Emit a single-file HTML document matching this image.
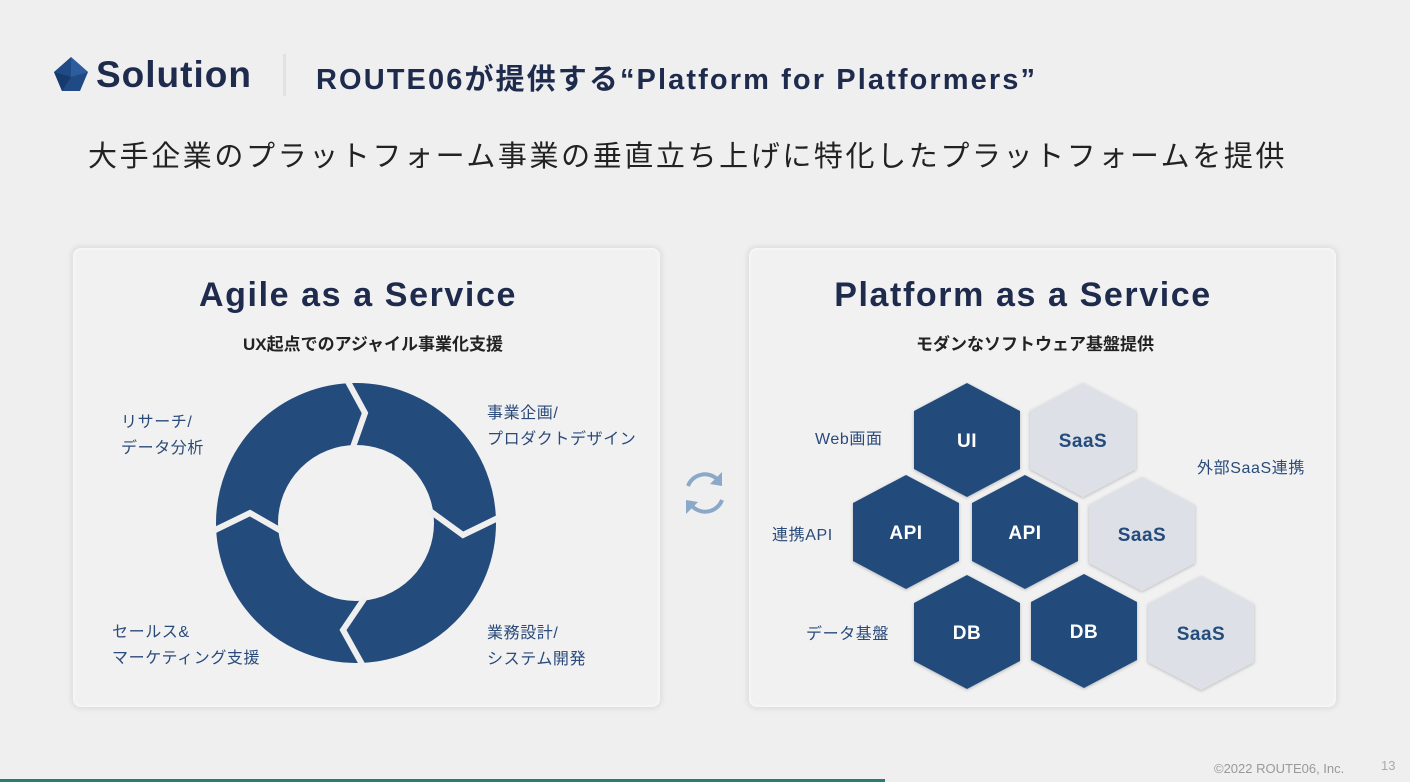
<!DOCTYPE html>
<html><head><meta charset="utf-8"><style>
body{margin:0;width:1410px;height:782px;background:#efefef;position:relative;overflow:hidden;font-family:"Liberation Sans","Noto Sans CJK JP",sans-serif;color:#1e2b4d}
.a{position:absolute;white-space:nowrap}
.card{position:absolute;top:248px;height:459px;background:#f1f1f1;border-radius:8px;box-shadow:0 0 6px 2px rgba(0,0,0,.08), inset 0 0 4px rgba(255,255,255,.9)}
.h{font-weight:bold;font-size:34px;color:#1e2b4d;text-align:center;letter-spacing:1.6px}
.s{font-size:17px;font-weight:bold;text-align:center;color:#222}
.l{font-size:16px;color:#2a4a7a;line-height:26px;letter-spacing:.6px}
</style></head><body>
<svg class="a" style="left:54px;top:57px" width="36" height="36" viewBox="0 0 36 36"><polygon points="17,0 34,15 26,34 8,34 0,15" fill="#1f4a85"/><polygon points="17,0 34,15 17,20" fill="#2d5d9c"/><polygon points="0,15 17,20 8,34" fill="#163a6c"/></svg>
<div class="a" style="left:96px;top:54px;font-size:37px;font-weight:bold;color:#1e2b4d;letter-spacing:1px">Solution</div>
<div class="a" style="left:283px;top:54px;width:3px;height:42px;background:#e2e2e2"></div>
<div class="a" style="left:316px;top:56px;font-size:29px;font-weight:bold;color:#1e2b4d;letter-spacing:2.1px">ROUTE06が提供する“Platform for Platformers”</div>
<div class="a" style="left:88px;top:133px;font-size:29px;color:#222;letter-spacing:2.6px">大手企業のプラットフォーム事業の垂直立ち上げに特化したプラットフォームを提供</div>
<div class="card" style="left:73px;width:587px">
<div class="a h" style="top:28px;left:0;width:570px">Agile as a Service</div>
<div class="a s" style="top:82px;left:0;width:600px">UX起点でのアジャイル事業化支援</div>
</div>
<div class="card" style="left:749px;width:587px">
<div class="a h" style="top:28px;left:0;width:548px">Platform as a Service</div>
<div class="a s" style="top:82px;left:0;width:572px">モダンなソフトウェア基盤提供</div>
</div>
<svg class="a" style="left:0;top:0" width="1410" height="782">
<circle cx="356" cy="523" r="109" fill="none" stroke="#234b7c" stroke-width="62"/>
<g fill="none" stroke="#efefef" stroke-width="6" stroke-linejoin="miter">
<polyline points="347,380 365,413 353,447"/>
<polyline points="430,511 463,535 500,517"/>
<polyline points="366,596 343,630 363,666"/>
<polyline points="283,532 250,513 213,531"/>
</g>
<g fill="none" stroke="#8aa8c8" stroke-width="4">
<path d="M688,486 A18,18 0 0 1 718,480"/><polygon points="722,472 722,486 710,484" fill="#8aa8c8" stroke="none"/>
<path d="M722,500 A18,18 0 0 1 692,506"/><polygon points="686,514 686,500 698,502" fill="#8aa8c8" stroke="none"/>
</g>
<defs><filter id="f"><feDropShadow dx="0" dy="1" stdDeviation="1.5" flood-opacity=".25"/></filter></defs>
<g filter="url(#f)">
<g fill="#234b7c"><polygon points="967,383 1020,411 1020,469 967,497 914,469 914,411"/>
<polygon points="906,475 959,503 959,561 906,589 853,561 853,503"/>
<polygon points="1025,475 1078,503 1078,561 1025,589 972,561 972,503"/>
<polygon points="967,575 1020,603 1020,661 967,689 914,661 914,603"/>
<polygon points="1084,574 1137,602 1137,660 1084,688 1031,660 1031,602"/></g>
<g fill="#dde0e6"><polygon points="1083,383 1136,411 1136,469 1083,497 1030,469 1030,411"/>
<polygon points="1142,477 1195,505 1195,563 1142,591 1089,563 1089,505"/>
<polygon points="1201,576 1254,604 1254,662 1201,690 1148,662 1148,604"/></g>
</g>
<g font-family="Liberation Sans" font-weight="bold" font-size="19" text-anchor="middle" letter-spacing="0.5">
<g fill="#fff"><text x="967" y="447">UI</text><text x="906" y="539">API</text><text x="1025" y="539">API</text><text x="967" y="639">DB</text><text x="1084" y="638">DB</text></g>
<g fill="#234b7c"><text x="1083" y="447">SaaS</text><text x="1142" y="541">SaaS</text><text x="1201" y="640">SaaS</text></g>
</g>
</svg>
<div class="a l" style="left:121px;top:410px">リサーチ/<br>データ分析</div>
<div class="a l" style="left:487px;top:401px">事業企画/<br>プロダクトデザイン</div>
<div class="a l" style="left:112px;top:620px">セールス&amp;<br>マーケティング支援</div>
<div class="a l" style="left:487px;top:621px">業務設計/<br>システム開発</div>
<div class="a l" style="left:815px;top:427px">Web画面</div>
<div class="a l" style="left:772px;top:523px">連携API</div>
<div class="a l" style="left:806px;top:622px">データ基盤</div>
<div class="a l" style="left:1197px;top:456px">外部SaaS連携</div>
<div class="a" style="left:1214px;top:761px;font-size:13px;color:#999">©2022 ROUTE06, Inc.</div>
<div class="a" style="left:1381px;top:758px;font-size:13px;color:#aaa">13</div>
<div class="a" style="left:0;top:779px;width:885px;height:3px;background:#2c7a78"></div>
</body></html>
